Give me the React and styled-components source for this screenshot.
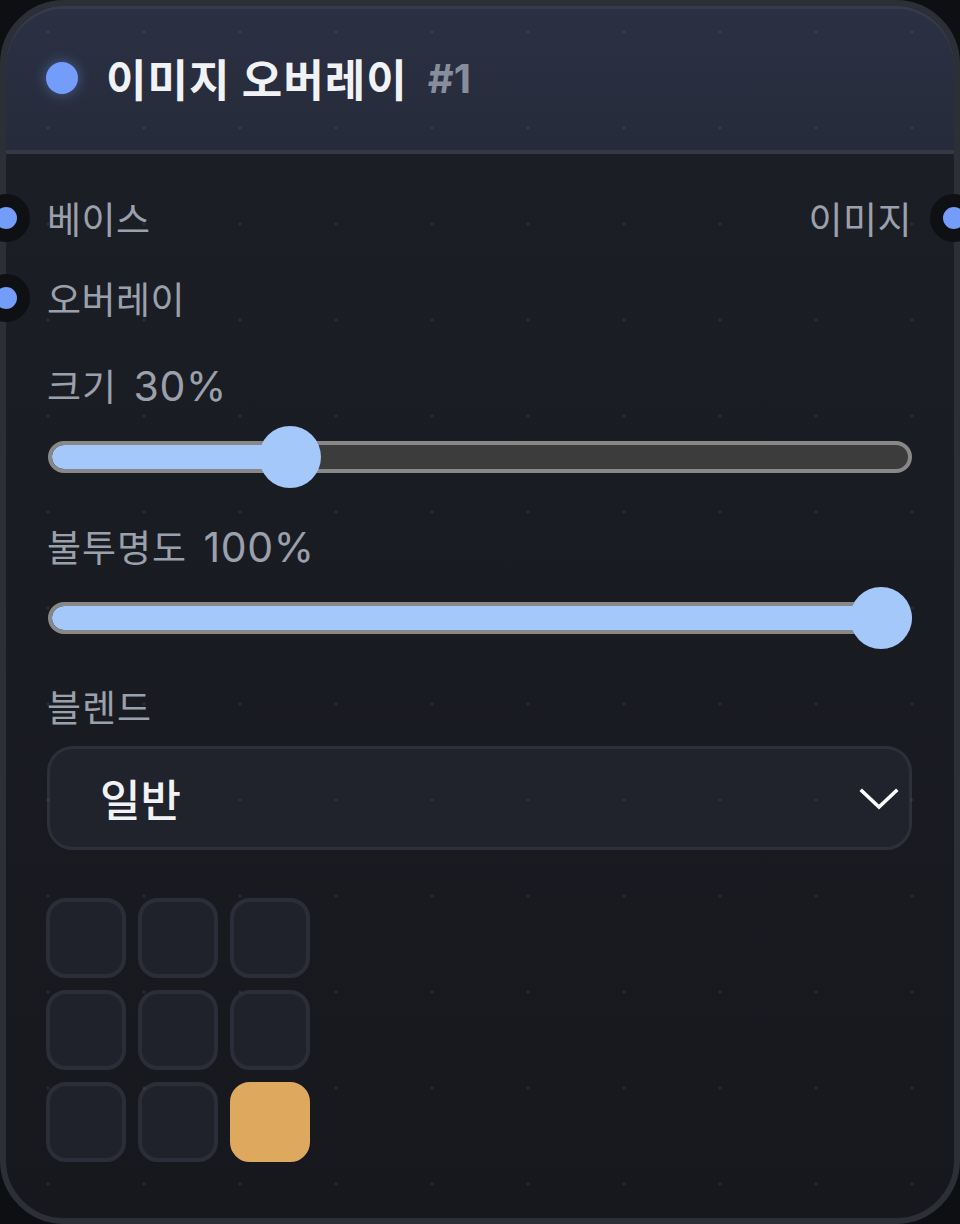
import React from "react";
import styled, { createGlobalStyle } from "styled-components";

const GlobalStyle = createGlobalStyle`
  html, body {
    margin: 0;
    padding: 0;
    background: #0e0f13;
  }
  body {
    font-family: "Inter", "Noto Sans CJK KR", "Noto Sans", sans-serif;
  }
  * { box-sizing: border-box; }
`;

const Node = styled.div`
  position: relative;
  width: 960px;
  height: 1224px;
  border: 6px solid #2d2f37;
  border-radius: 64px;
  background: linear-gradient(180deg, #1d1f26 0%, #16181e 100%);
  display: flex;
  flex-direction: column;

  &::after {
    content: "";
    position: absolute;
    inset: -6px;
    border-radius: 64px;
    pointer-events: none;
    background-image: radial-gradient(circle at 48px 48px, rgba(255, 255, 255, 0.06) 1.5px, transparent 1.9px);
    background-size: 96px 96px;
    background-position: 0 -16px;
  }
`;

const Header = styled.div`
  height: 148px;
  flex: none;
  display: flex;
  align-items: center;
  padding-left: 40px;
  border-bottom: 4px solid #353847;
  border-radius: 58px 58px 0 0;
  background: linear-gradient(180deg, #2b3143 0%, #262b3b 100%);
  box-shadow: inset 0 3px 0 rgba(255, 255, 255, 0.05);
`;

const StatusDot = styled.span`
  width: 32px;
  height: 32px;
  border-radius: 50%;
  background: #749dfb;
  box-shadow: 0 0 14px rgba(116, 157, 251, 0.45);
  margin-right: 28px;
  flex: none;
`;

const Title = styled.span`
  color: #f1f2f6;
  font-size: 44px;
  font-weight: 700;
  letter-spacing: 1px;
`;

const Index = styled.span`
  color: #878d9c;
  font-size: 40px;
  font-weight: 700;
  margin-left: 20px;
`;

const Body = styled.div`
  flex: 1;
  display: flex;
  flex-direction: column;
  padding: 24px 42px 0 41px;
`;

const PortRow = styled.div`
  position: relative;
  height: 80px;
  display: flex;
  align-items: center;
  justify-content: ${(p) => (p.$side === "right" ? "flex-end" : "flex-start")};
  margin-top: ${(p) => p.$mt || 0}px;
`;

const PortLabel = styled.span`
  color: #9ba0ad;
  font-size: 37px;
  letter-spacing: 0.5px;
  font-weight: 400;
`;

const Port = styled.span`
  position: absolute;
  top: 50%;
  ${(p) => (p.$side === "right" ? "right: -66px;" : "left: -65px;")}
  width: 48px;
  height: 48px;
  margin-top: -24px;
  border-radius: 50%;
  background: #749dfb;
  border: 13px solid #0f1014;
`;

const FieldLabel = styled.div`
  color: #9ba0ad;
  font-size: 37px;
  letter-spacing: 1px;
  line-height: 48px;
  height: 48px;
  margin-top: ${(p) => p.$mt || 0}px;
  white-space: nowrap;
`;

const Num = styled.span`
  font-family: "Inter", sans-serif;
  font-size: 41px;
  line-height: 1;
  letter-spacing: 0.6px;
  margin-left: 5px;
`;

const SliderWrap = styled.div`
  position: relative;
  height: 62px;
  margin-top: ${(p) => p.$mt || 0}px;
  display: flex;
  align-items: center;
  margin-left: 1px;
`;

const Track = styled.div`
  position: relative;
  width: 100%;
  height: 32px;
  border: 4px solid #888888;
  border-radius: 16px;
  background: #3c3c3c;
  overflow: hidden;
`;

const Fill = styled.div`
  height: 100%;
  background: #a4c8fa;
  border-radius: 12px 0 0 12px;
`;

const Thumb = styled.div`
  position: absolute;
  top: 0;
  width: 62px;
  height: 62px;
  border-radius: 50%;
  background: #a4c8fa;
  transform: translateX(-50%);
`;

function Slider({ fraction, mt }) {
  const pos = `calc(31px + ${fraction} * (100% - 62px))`;
  return (
    <SliderWrap $mt={mt}>
      <Track>
        <Fill style={{ width: `calc(${fraction} * (100% - 62px) + 31px)` }} />
      </Track>
      <Thumb style={{ left: pos }} />
    </SliderWrap>
  );
}

const Select = styled.div`
  margin-top: 13px;
  height: 104px;
  border: 3px solid #2d303b;
  border-radius: 26px;
  background: #20232c;
  display: flex;
  align-items: center;
  justify-content: space-between;
  padding: 0 10px 0 50px;
`;

const SelectValue = styled.span`
  color: #f1f2f6;
  font-size: 44px;
  font-weight: 500;
`;

const Grid = styled.div`
  margin-top: 48px;
  display: grid;
  grid-template-columns: repeat(3, 80px);
  grid-auto-rows: 80px;
  gap: 12px;
  margin-left: -1px;
`;

const Cell = styled.div`
  border-radius: 20px;
  border: 4px solid ${(p) => (p.$active ? "#dea85f" : "#2b2e38")};
  background: ${(p) => (p.$active ? "#dea85f" : "#1f222a")};
`;

export default function App() {
  const cells = Array.from({ length: 9 }, (_, i) => i === 8);
  return (
    <>
      <GlobalStyle />
      <Node>
        <Header>
          <StatusDot />
          <Title>이미지 오버레이</Title>
          <Index>#1</Index>
        </Header>
        <Body>
          <PortRow>
            <Port />
            <PortLabel>베이스</PortLabel>
          </PortRow>
          <PortRow $side="right" $mt={-80}>
            <PortLabel>이미지</PortLabel>
            <Port $side="right" />
          </PortRow>
          <PortRow>
            <Port />
            <PortLabel>오버레이</PortLabel>
          </PortRow>
          <FieldLabel $mt={26}>
            크기 <Num>30%</Num>
          </FieldLabel>
          <Slider fraction={0.263} mt={14} />
          <FieldLabel $mt={37}>
            불투명도 <Num>100%</Num>
          </FieldLabel>
          <Slider fraction={1} mt={14} />
          <FieldLabel $mt={36}>블렌드</FieldLabel>
          <Select>
            <SelectValue>일반</SelectValue>
            <svg width="40" height="28" viewBox="0 0 40 28" fill="none">
              <polyline points="3,7 20,23 37,7" stroke="#ffffff" strokeWidth="3.6" strokeLinecap="square" strokeLinejoin="miter" />
            </svg>
          </Select>
          <Grid>
            {cells.map((a, i) => (
              <Cell key={i} $active={a} />
            ))}
          </Grid>
        </Body>
      </Node>
    </>
  );
}
